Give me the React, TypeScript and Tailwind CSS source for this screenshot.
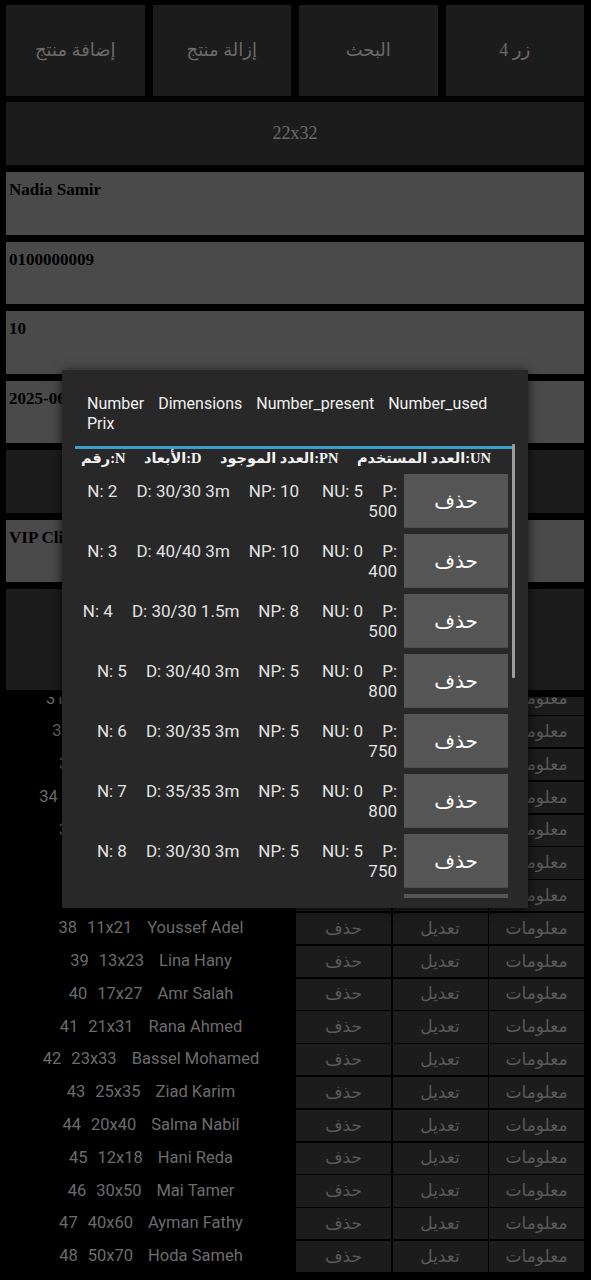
import React from "react";

const SERIF = "font-['Liberation_Serif','DejaVu_Serif','DejaVu_Sans',serif]";
const ROBOTO = "font-['Roboto','Noto_Sans',sans-serif]";

const topButtons = ["إضافة منتج", "إزالة منتج", "البحث", "زر 4"];

type Field = { kind: "input"; text: string } | { kind: "dark" };

const fields: Field[] = [
  { kind: "input", text: "Nadia Samir" },
  { kind: "input", text: "0100000009" },
  { kind: "input", text: "10" },
  { kind: "input", text: "2025-06-15" },
  { kind: "dark" },
  { kind: "input", text: "VIP Client" },
];

const list: [number, string, string][] = [
  [31, "15x25", "Mostafa Ibrahim"],
  [32, "18x28", "Karim Mostafa"],
  [33, "19x29", "Omar Khaled"],
  [34, "14x24", "Mahmoud Hassan"],
  [35, "16x26", "Nour Ibrahim"],
  [36, "10x20", "Sara Fawzy"],
  [37, "22x32", "Mona Adel"],
  [38, "11x21", "Youssef Adel"],
  [39, "13x23", "Lina Hany"],
  [40, "17x27", "Amr Salah"],
  [41, "21x31", "Rana Ahmed"],
  [42, "23x33", "Bassel Mohamed"],
  [43, "25x35", "Ziad Karim"],
  [44, "20x40", "Salma Nabil"],
  [45, "12x18", "Hani Reda"],
  [46, "30x50", "Mai Tamer"],
  [47, "40x60", "Ayman Fathy"],
  [48, "50x70", "Hoda Sameh"],
];

const products: [string, string, string, string, string][] = [
  ["2", "30/30 3m", "10", "5", "500"],
  ["3", "40/40 3m", "10", "0", "400"],
  ["4", "30/30 1.5m", "8", "0", "500"],
  ["5", "30/40 3m", "5", "0", "800"],
  ["6", "30/35 3m", "5", "0", "750"],
  ["7", "35/35 3m", "5", "0", "800"],
  ["8", "30/30 3m", "5", "5", "750"],
  ["9", "40/40 3m", "5", "0", "900"],
];

function HeaderLabel({ ar, la }: { ar: string; la: string }) {
  return (
    <span className="flex whitespace-nowrap">
      <span>{ar}</span>
      <span>{la}</span>
    </span>
  );
}

export default function App() {
  return (
    <div className="relative w-[591px] h-[1280px] overflow-hidden bg-black">
      <div className="pl-[6px] pr-[7px] pt-[5px]">
        {/* top buttons */}
        <div className="grid grid-cols-4 gap-x-[8px]">
          {topButtons.map((t) => (
            <div
              key={t}
              dir="rtl"
              className={`h-[91px] bg-[#1c1c1c] flex items-center justify-center text-[18px] text-[#6b6b6b] ${SERIF}`}
            >
              {t}
            </div>
          ))}
        </div>
        <div
          className={`mt-[6px] h-[63px] bg-[#1c1c1c] flex items-center justify-center text-[18px] text-[#6b6b6b] ${SERIF}`}
        >
          22x32
        </div>

        {/* fields */}
        <div className="mt-[7px] flex flex-col gap-[7px]">
          {fields.map((f, i) =>
            f.kind === "input" ? (
              <div
                key={i}
                className={`h-[62.5px] bg-[#4a4a4a] pl-[3px] pt-[8px] text-[17px] leading-[20px] font-bold text-black whitespace-nowrap overflow-hidden ${SERIF}`}
              >
                {f.text}
              </div>
            ) : (
              <div key={i} className="h-[62.5px] bg-[#1c1c1c]" />
            )
          )}
          <div className="h-[101px] bg-[#1c1c1c]" />
        </div>

        {/* list */}
        <div className="mt-[7px] h-[583px] overflow-hidden">
          <div className="mt-[-13.6px]">
            {list.map(([n, d, name]) => (
              <div key={n} className="flex h-[32.8px] pb-[1.6px]">
                <div
                  className={`w-[290px] flex items-center justify-center text-[16.5px] text-[#6c6c6c] whitespace-nowrap ${ROBOTO}`}
                >
                  <span>{n}</span>
                  <span className="ml-[10px]">{d}</span>
                  <span className="ml-[15px]">{name}</span>
                </div>
                <div className={`flex-1 grid grid-cols-3 gap-x-[1.5px] text-[17px] text-[#5a5a5a] ${SERIF}`}>
                  <div className="bg-[#1c1c1c] flex items-center justify-center">حذف</div>
                  <div className="bg-[#1c1c1c] flex items-center justify-center">تعديل</div>
                  <div className="bg-[#1c1c1c] flex items-center justify-center">معلومات</div>
                </div>
              </div>
            ))}
          </div>
        </div>
      </div>

      {/* dialog */}
      <div className="absolute left-[62px] top-[370px] w-[466px] h-[538px] bg-[#282828] shadow-[0_2px_10px_rgba(0,0,0,0.75)]">
        <div className={`pt-[24px] px-[25px] text-[16px] leading-[20px] text-[#f0f0f0] ${ROBOTO}`}>
          <div className="flex gap-x-[14px] whitespace-nowrap">
            <span>Number</span>
            <span>Dimensions</span>
            <span>Number_present</span>
            <span>Number_used</span>
          </div>
          <div>Prix</div>
        </div>

        <div className="relative mt-[10px] ml-[13px] w-[440px] h-[454px] overflow-hidden">
          <div className="mt-[2px] h-[3px] w-[438px] bg-[#3a9fca]" />
          <div
            className={`h-[25px] w-[410px] ml-[6px] flex items-start justify-between text-[14.5px] leading-[18px] font-bold text-[#f2f2f2] ${SERIF}`}
          >
            <HeaderLabel ar="رقم" la=":N" />
            <HeaderLabel ar="الأبعاد" la=":D" />
            <HeaderLabel ar="العدد الموجود" la=":PN" />
            <HeaderLabel ar="العدد المستخدم" la=":UN" />
          </div>

          <div className="flex flex-col gap-[6px]">
            {products.map(([n, d, np, nu, p]) => (
              <div key={n} className="flex items-center h-[54px] shrink-0">
                <div className={`w-[322px] text-[17px] leading-[20.5px] text-[#e2e2e2] ${ROBOTO}`}>
                  <div className="flex justify-end whitespace-nowrap">
                    <span>N: {n}</span>
                    <span className="ml-[19px]">D: {d}</span>
                    <span className="ml-[19px]">NP: {np}</span>
                    <span className="ml-[23px]">NU: {nu}</span>
                    <span className="ml-[19px]">P:</span>
                  </div>
                  <div className="text-right">{p}</div>
                </div>
                <div
                  className={`ml-[7px] w-[104px] h-full bg-[#555555] border-b border-[#4d4d4d] flex items-center justify-center text-[20px] text-white ${SERIF}`}
                >
                  حذف
                </div>
              </div>
            ))}
          </div>

          <div className="absolute left-[437px] top-0 w-[3px] h-[234px] bg-[#9c9c9c] rounded-[1px]" />
        </div>
      </div>
    </div>
  );
}
